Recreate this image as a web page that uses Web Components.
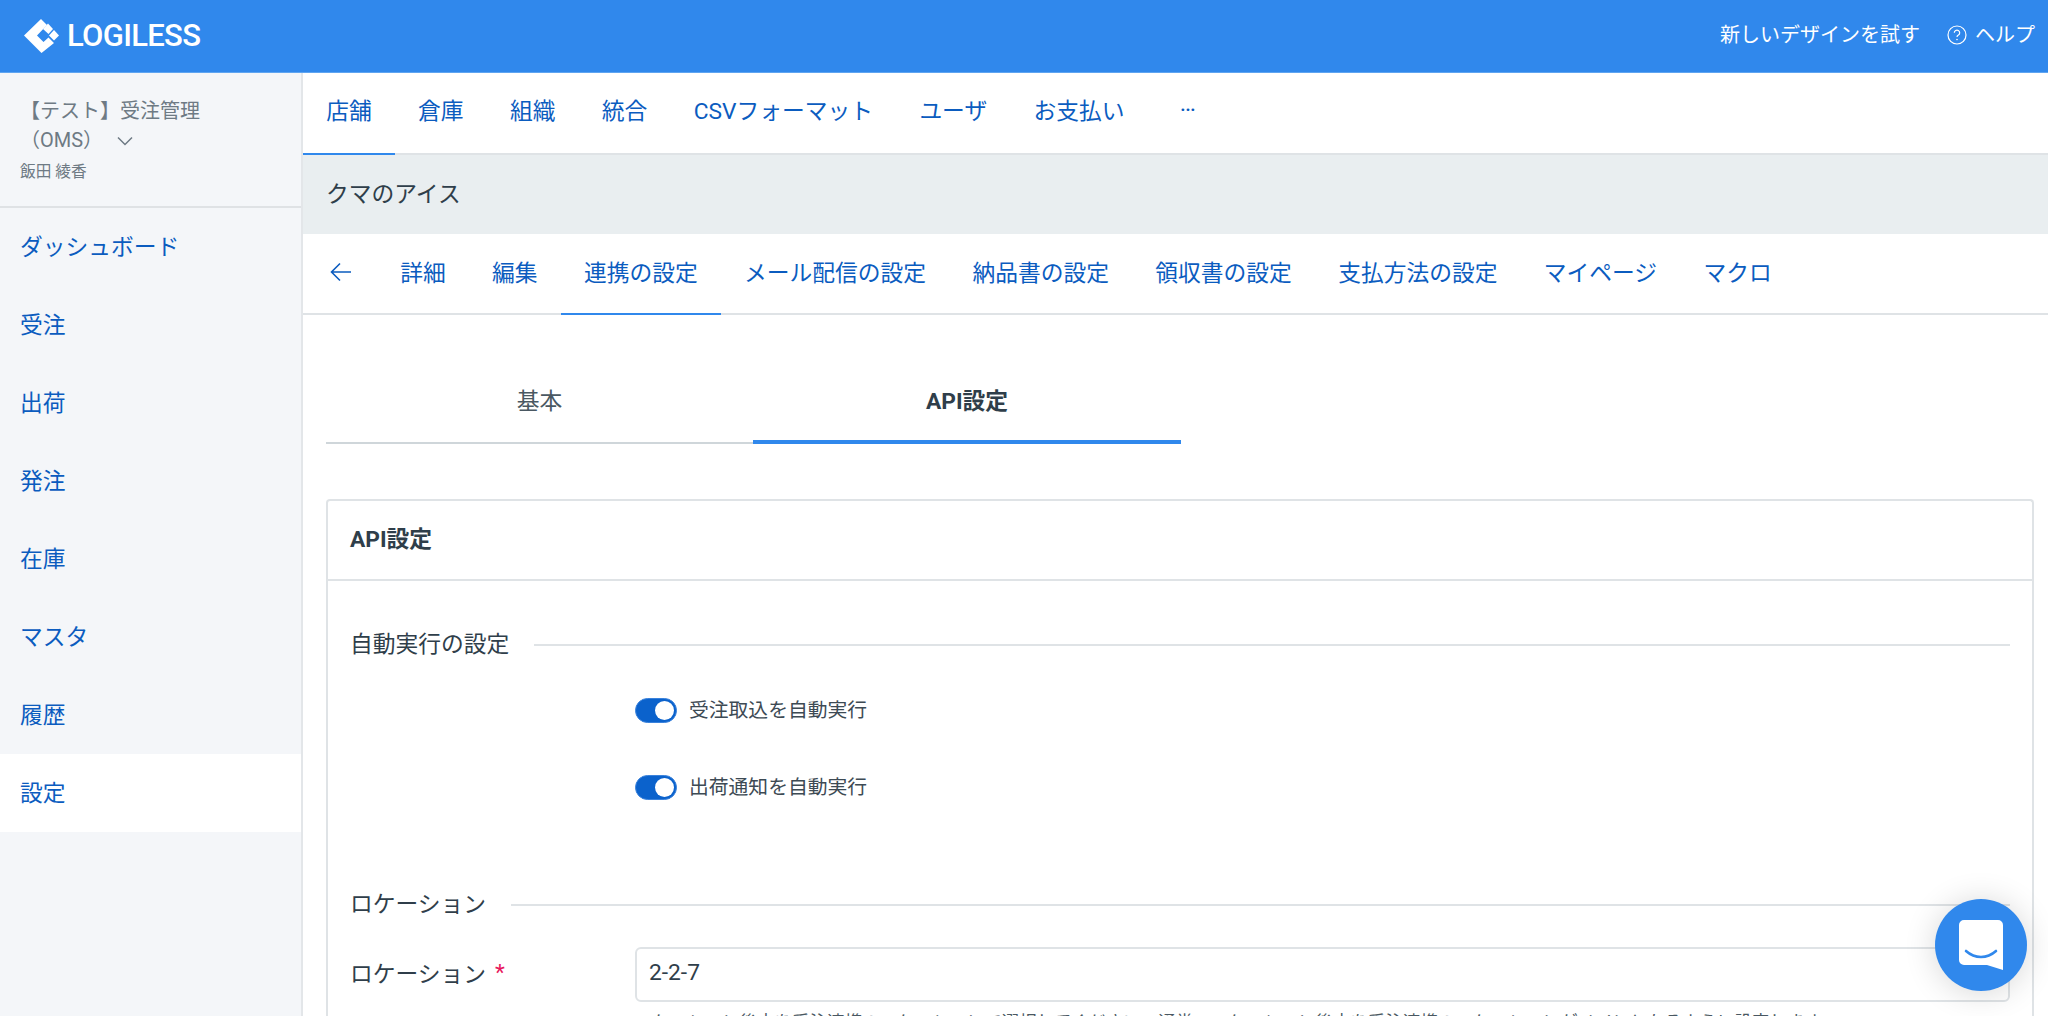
<!DOCTYPE html>
<html lang="ja">
<head>
<meta charset="utf-8">
<title>LOGILESS</title>
<style>
  html, body { margin: 0; height: 1016px; overflow: hidden; }
  body {
    font-family: Roboto, "Noto Sans CJK JP", sans-serif;
    color: #2f3e4a;
    background: #fff;
  }
</style>
</head>
<body>
<app-shell>
  <top-bar slot="top"></top-bar>
  <side-nav slot="side" active="設定"></side-nav>

  <tab-row height="82">
    <tab-link active>店舗</tab-link>
    <tab-link>倉庫</tab-link>
    <tab-link>組織</tab-link>
    <tab-link>統合</tab-link>
    <tab-link>CSVフォーマット</tab-link>
    <tab-link>ユーザ</tab-link>
    <tab-link>お支払い</tab-link>
    <tab-link class="more">…</tab-link>
  </tab-row>
  <shop-title>クマのアイス</shop-title>
  <tab-row height="81" class="sub">
    <back-arrow></back-arrow>
    <tab-link class="low">詳細</tab-link>
    <tab-link class="low">編集</tab-link>
    <tab-link class="low" active>連携の設定</tab-link>
    <tab-link class="low">メール配信の設定</tab-link>
    <tab-link class="low">納品書の設定</tab-link>
    <tab-link class="low">領収書の設定</tab-link>
    <tab-link class="low">支払方法の設定</tab-link>
    <tab-link class="low">マイページ</tab-link>
    <tab-link class="low">マクロ</tab-link>
  </tab-row>

  <page-body>
    <segment-tabs>
      <segment-tab>基本</segment-tab>
      <segment-tab active>API設定</segment-tab>
    </segment-tabs>
    <form-card heading="API設定">
      <form-section heading="自動実行の設定" class="auto">
        <toggle-row>受注取込を自動実行</toggle-row>
        <toggle-row>出荷通知を自動実行</toggle-row>
      </form-section>
      <form-section heading="ロケーション" class="loc">
        <text-field label="ロケーション" value="2-2-7" required
          help="ロケーション後方を受注連携のロケーションで選択してください。通常、ロケーション後方を受注連携のロケーションがメインとなるように設定します。"></text-field>
      </form-section>
    </form-card>
  </page-body>

  <chat-bubble slot="float"></chat-bubble>
</app-shell>

<script>
  // small helper so each element only has to declare css + html
  class ShadowElement extends HTMLElement {
    constructor() {
      super();
      this.attachShadow({ mode: "open" });
    }

    connectedCallback() {
      this.shadowRoot.innerHTML = `<style>${this.constructor.styles}</style>${this.markup()}`;
    }

    markup() {
      return "<slot></slot>";
    }
  }

  class AppShell extends ShadowElement {
    static get styles() {
      return /* css */`
        :host { display: grid; grid-template-columns: 303px 1fr; grid-template-rows: 73px 1fr; height: 1016px; overflow: hidden; position: relative; }
        .top { grid-column: 1 / 3; }
        .main { min-width: 0; overflow: hidden; }
      `;
    }

    markup() {
      return /* html */`
        <div class="top"><slot name="top"></slot></div>
        <slot name="side"></slot>
        <div class="main"><slot></slot></div>
        <slot name="float"></slot>
      `;
    }
  }

  class TopBar extends ShadowElement {
    static get styles() {
      return /* css */`
        :host { display: flex; align-items: center; justify-content: space-between; height: 73px; box-sizing: border-box; background: #3088ec; border-bottom: 1px solid #5fa5f1; color: #fff; padding: 0 13px 1px 24px; }
        .logo { display: flex; align-items: center; gap: 8px; font-size: 31px; font-weight: 500; letter-spacing: -0.7px; }
        .links { display: flex; align-items: center; font-size: 20px; padding-bottom: 4px; }
        .try { margin-right: 27px; }
        .help { display: flex; align-items: center; gap: 8px; }
        .help svg { margin-top: 3px; }
      `;
    }

    markup() {
      return /* html */`
        <div class="logo">
          <svg width="35" height="34" viewBox="24 19 35 34" fill="#fff">
            <polygon points="24,35.5 41,19 47,25 37,35.5 43.5,42 48.5,37.5 54,43 41.500,53"/>
            <polygon points="48,23.500 53,29 48.500,34 43,29"/>
            <polygon points="54,30 59,35.500 54,40.500 49,35.500"/>
          </svg>
          <span>LOGILESS</span>
        </div>
        <div class="links">
          <span class="try">新しいデザインを試す</span>
          <span class="help">
            <svg width="20" height="20" viewBox="0 0 20 20" fill="none" stroke="#fff" stroke-width="1.2">
              <circle cx="10" cy="10" r="9"/>
              <path d="M7.300 7.800a2.700 2.700 0 1 1 4.100 2.300c-.9.500-1.400 1-1.400 2"/>
              <circle cx="10" cy="14.600" r=".5" fill="#fff" stroke-width=".6"/>
            </svg>
            ヘルプ
          </span>
        </div>
      `;
    }
  }

  class SideNav extends ShadowElement {
    static get styles() {
      return /* css */`
        :host { display: block; background: #f4f6f9; border-right: 2px solid #e3e6e9; box-sizing: border-box; height: 943px; }
        .account { height: 135px; box-sizing: border-box; border-bottom: 2px solid #dfe2e5; padding: 24px 20px 0; color: #6e7a84; }
        .name { font-size: 20px; line-height: 29px; width: 225px; }
        .name svg { margin-left: 14px; vertical-align: 1px; }
        .user { font-size: 15.700px; line-height: 20px; margin-top: 7px; }
        a { display: flex; align-items: center; height: 78px; box-sizing: border-box; padding: 0 0 4px 20px; font-size: 22.750px; color: #0b5cbf; }
        a.on { background: #fff; }
      `;
    }

    markup() {
      const items = ["ダッシュボード", "受注", "出荷", "発注", "在庫", "マスタ", "履歴", "設定"];
      const active = this.getAttribute("active");
      return /* html */`
        <div class="account">
          <div class="name">【テスト】受注管理（OMS）<svg width="16" height="10" viewBox="0 0 16 10" fill="none" stroke="#6e7a84" stroke-width="1.500"><path d="M1 1.500l7 7 7-7"/></svg></div>
          <div class="user">飯田 綾香</div>
        </div>
        ${items.map((item) => `<a class="${item === active ? "on" : ""}">${item}</a>`).join("")}
      `;
    }
  }

  class TabRow extends ShadowElement {
    static get styles() {
      return /* css */`
        :host { display: flex; align-items: stretch; box-sizing: border-box; background: #fff; border-bottom: 2px solid #dfe3e6; }
      `;
    }

    connectedCallback() {
      super.connectedCallback();
      this.style.height = `${this.getAttribute("height")}px`;
    }
  }

  class TabLink extends ShadowElement {
    static get styles() {
      return /* css */`
        :host { display: flex; align-items: center; box-sizing: border-box; padding: 0 23.200px 8px; font-size: 22.750px; color: #0b5cbf; margin-bottom: -2px; border-bottom: 2px solid transparent; white-space: nowrap; }
        :host([active]) { border-bottom-color: #3088ec; }
        :host(.low) { padding-bottom: 5px; }
        :host(.more) { padding-left: 32px; padding-bottom: 21px; font-size: 24px; }
      `;
    }
  }

  class BackArrow extends ShadowElement {
    static get styles() {
      return /* css */`
        :host { display: flex; align-items: center; padding: 0 25px 4px 27px; }
      `;
    }

    markup() {
      return /* html */`
        <svg width="22" height="20" viewBox="0 0 22 20" fill="none" stroke="#0b5cbf" stroke-width="1.600"><path d="M21 10H2M10 1.500L1.500 10l8.500 8.500"/></svg>
      `;
    }
  }

  class ShopTitle extends ShadowElement {
    static get styles() {
      return /* css */`
        :host { display: flex; align-items: center; height: 79px; box-sizing: border-box; padding: 0 0 5px 23px; background: #e9eef0; font-size: 22.750px; color: #2f3e4a; }
      `;
    }
  }

  class PageBody extends ShadowElement {
    static get styles() {
      return /* css */`
        :host { display: block; padding: 48px 14px 0 23px; }
      `;
    }
  }

  class SegmentTabs extends ShadowElement {
    static get styles() {
      return /* css */`
        :host { display: grid; grid-template-columns: 427px 428px; height: 81px; margin-bottom: 55px; }
      `;
    }
  }

  class SegmentTab extends ShadowElement {
    static get styles() {
      return /* css */`
        :host { display: flex; align-items: center; justify-content: center; padding-bottom: 7px; box-sizing: border-box; border-bottom: 2px solid #cfd6da; font-size: 22.750px; color: #4a5862; }
        :host([active]) { border-bottom: 4px solid #3088ec; padding-bottom: 5px; font-weight: 700; color: #2f3e4a; }
      `;
    }
  }

  class FormCard extends ShadowElement {
    static get styles() {
      return /* css */`
        :host { display: block; border: 2px solid #dfe3e6; border-bottom: 0; border-radius: 4px 4px 0 0; }
        .head { display: flex; align-items: center; height: 72px; padding: 0 0 6px 22px; border-bottom: 2px solid #dfe3e6; font-size: 22.750px; font-weight: 700; }
        .body { padding: 43px 22px 0 22px; }
      `;
    }

    markup() {
      return /* html */`
        <div class="head">${this.getAttribute("heading")}</div>
        <div class="body"><slot></slot></div>
      `;
    }
  }

  class FormSection extends ShadowElement {
    static get styles() {
      return /* css */`
        :host { display: block; }
        :host(.auto) { margin-bottom: 58px; }
        .title { display: flex; align-items: center; gap: 25px; height: 42px; font-size: 22.750px; }
        .title span { padding-bottom: 6px; }
        .title::after { content: ""; flex: 1; height: 2px; background: #dfe3e6; }
        .rows { display: flex; flex-direction: column; }
        :host(.auto) .rows { padding-top: 6px; }
      `;
    }

    markup() {
      return /* html */`
        <div class="title"><span>${this.getAttribute("heading")}</span></div>
        <div class="rows"><slot></slot></div>
      `;
    }
  }

  class ToggleRow extends ShadowElement {
    static get styles() {
      return /* css */`
        :host { display: flex; align-items: center; gap: 12px; height: 77px; padding-left: 285px; font-size: 19.800px; color: #3d4a54; }
        .switch { width: 42px; height: 25px; border-radius: 13px; background: #0b62cc; border: 1px solid #3a82dc; box-sizing: border-box; position: relative; flex: none; }
        .knob { position: absolute; right: 2.500px; top: 2px; width: 19px; height: 19px; border-radius: 50%; background: #fff; }
        .text { padding-bottom: 4px; }
      `;
    }

    markup() {
      return /* html */`
        <span class="switch"><span class="knob"></span></span>
        <span class="text"><slot></slot></span>
      `;
    }
  }

  class TextField extends ShadowElement {
    static get styles() {
      return /* css */`
        :host { display: grid; grid-template-columns: 285px 1fr; margin-top: 21px; }
        .label { display: flex; align-items: center; height: 55px; box-sizing: border-box; padding-bottom: 5px; font-size: 22.750px; }
        .req { color: #e8175d; margin-left: 9px; font-size: 22.750px; }
        .box { display: flex; align-items: center; height: 55px; box-sizing: border-box; padding: 0 0 5px 12px; border: 2px solid #dfe3e6; border-radius: 6px; font-size: 22.750px; color: #2f3e4a; }
        .help { margin-top: 8px; font-size: 17.500px; line-height: 24px; color: #4a5862; white-space: nowrap; }
      `;
    }

    markup() {
      const star = this.hasAttribute("required") ? `<span class="req">*</span>` : "";
      return /* html */`
        <div class="label">${this.getAttribute("label")}${star}</div>
        <div>
          <div class="box">${this.getAttribute("value")}</div>
          <div class="help">${this.getAttribute("help")}</div>
        </div>
      `;
    }
  }

  class ChatBubble extends ShadowElement {
    static get styles() {
      return /* css */`
        :host { position: absolute; left: 1935px; top: 899px; width: 92px; height: 92px; border-radius: 50%; background: #3088ec; display: flex; align-items: center; justify-content: center; box-shadow: 0 2px 32px rgba(0, 0, 0, .16); }
      `;
    }

    markup() {
      return /* html */`
        <svg width="44" height="50" viewBox="0 0 44 50">
          <path fill="#fff" d="M5 0h34a5 5 0 0 1 5 5v45l-16-5H5a5 5 0 0 1-5-5V5a5 5 0 0 1 5-5z"/>
          <path fill="none" stroke="#3088ec" stroke-width="2.600" stroke-linecap="round" d="M7 31c9 8 21 8 30 0"/>
        </svg>
      `;
    }
  }

  customElements.define("app-shell", AppShell);
  customElements.define("top-bar", TopBar);
  customElements.define("side-nav", SideNav);
  customElements.define("tab-row", TabRow);
  customElements.define("tab-link", TabLink);
  customElements.define("back-arrow", BackArrow);
  customElements.define("shop-title", ShopTitle);
  customElements.define("page-body", PageBody);
  customElements.define("segment-tabs", SegmentTabs);
  customElements.define("segment-tab", SegmentTab);
  customElements.define("form-card", FormCard);
  customElements.define("form-section", FormSection);
  customElements.define("toggle-row", ToggleRow);
  customElements.define("text-field", TextField);
  customElements.define("chat-bubble", ChatBubble);
</script>
</body>
</html>
